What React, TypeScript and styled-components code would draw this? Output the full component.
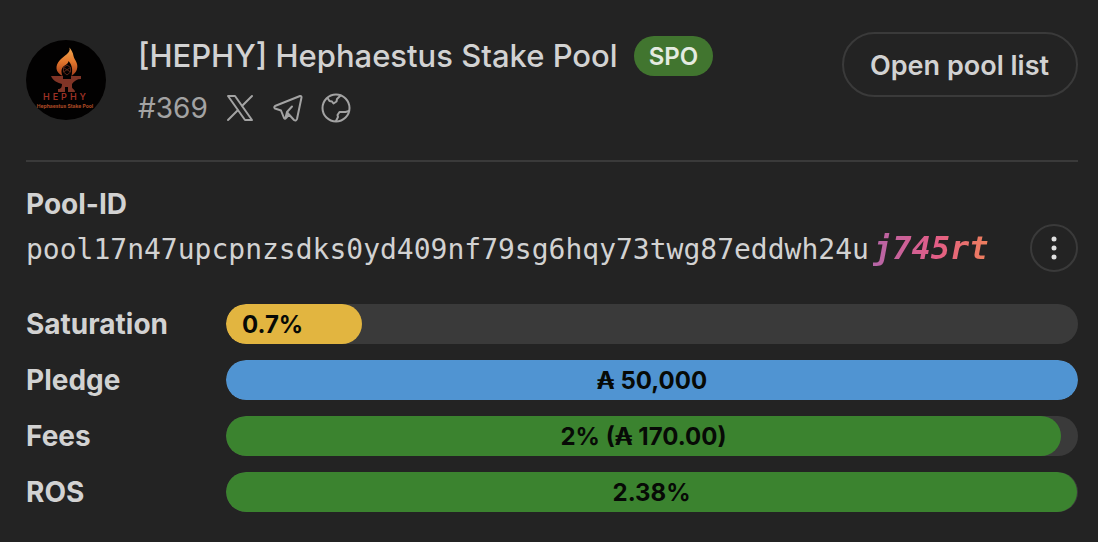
import React from "react";
import styled, { createGlobalStyle } from "styled-components";

const GlobalStyle = createGlobalStyle`
  *, *::before, *::after { box-sizing: border-box; }
  body {
    margin: 0;
    background: #232323;
    color: #d2d2d2;
    font-family: Inter, "Liberation Sans", sans-serif;
  }
`;

const Card = styled.main`
  padding: 32px 20px 28px 26px;
`;

const Header = styled.header`
  display: flex;
  align-items: flex-start;
  gap: 32px;
  padding-bottom: 32px;
  border-bottom: 2px solid #3a3a3a;
`;

const Logo = styled.svg`
  flex: none;
  width: 80px;
  height: 80px;
  margin-top: 8px;
`;

const Heading = styled.div`
  flex: 1;
  min-width: 0;
  padding-top: 4px;
`;

const TitleRow = styled.div`
  display: flex;
  align-items: center;
  gap: 16px;
`;

const Title = styled.h1`
  margin: 0;
  font-size: 31px;
  line-height: 40px;
  font-weight: 550;
`;

const Tag = styled.span`
  padding: 1px 15px 0;
  border-radius: 20px;
  background: #41752f;
  color: #e4ebe0;
  font-size: 24px;
  line-height: 39px;
  font-weight: 600;
`;

const MetaRow = styled.div`
  display: flex;
  align-items: center;
  gap: 16px;
  margin-top: 12px;
  color: #a3a3a3;
  font-size: 28px;
  line-height: 40px;
`;

const IconLink = styled.a`
  display: flex;
  color: inherit;
`;

const Icon = styled.svg`
  width: 32px;
  height: 32px;
  fill: none;
  stroke: currentColor;
  stroke-width: 2;
  stroke-linejoin: round;
  stroke-linecap: round;
`;

const OutlineButton = styled.button`
  flex: none;
  padding: 2px 27px 0 26px;
  border: 2px solid #3a3a3a;
  border-radius: 33px;
  background: transparent;
  color: #d2d2d2;
  font: 600 27px/59px Inter, "Liberation Sans", sans-serif;
`;

const PoolSection = styled.section`
  padding-top: 24px;
`;

const Label = styled.h2`
  margin: 0;
  font-size: 28px;
  line-height: 36px;
  font-weight: 650;
`;

const PoolRow = styled.div`
  display: flex;
  align-items: center;
  justify-content: space-between;
  height: 52px;
`;

const PoolId = styled.div`
  display: flex;
  align-items: baseline;
  gap: 4px;
  padding-top: 2px;
  font: 400 28px/48px "DejaVu Sans Mono", monospace;
`;

const PoolSuffix = styled.span`
  font-size: 32px;
  font-weight: 700;
  font-style: oblique;
  background: linear-gradient(90deg, #b565a7, #e35d86 55%, #ee7f5c);
  background-clip: text;
  -webkit-background-clip: text;
  color: transparent;
`;

const MenuButton = styled.button`
  display: grid;
  place-items: center;
  width: 48px;
  height: 48px;
  padding: 0;
  border: 2px solid #3a3a3a;
  border-radius: 50%;
  background: transparent;
  color: #e0e0e0;
`;

const Stats = styled.dl`
  display: grid;
  grid-template-columns: 200px 1fr;
  row-gap: 16px;
  margin: 30px 0 0;
`;

const StatName = styled.dt`
  font-size: 28px;
  line-height: 40px;
  font-weight: 650;
`;

const Track = styled.dd`
  margin: 0;
  height: 40px;
  border-radius: 20px;
  background: #3a3a3a;
  overflow: hidden;
`;

const Fill = styled.div<{ $color: string; $start?: boolean }>`
  height: 40px;
  padding: 1px 16px 0;
  border-radius: 20px;
  background: ${(p) => p.$color};
  text-align: ${(p) => (p.$start ? "left" : "center")};
  color: #070a06;
  font-size: 24px;
  line-height: 40px;
  font-weight: 700;
  white-space: nowrap;
`;

const stats = [
  { name: "Saturation", value: "0.7%", width: 16, color: "#e2b540", start: true },
  { name: "Pledge", value: "₳ 50,000", width: 100, color: "#5094d2" },
  { name: "Fees", value: "2% (₳ 170.00)", width: 98, color: "#3b832f" },
  { name: "ROS", value: "2.38%", width: 99.9, color: "#3b832f" },
];

function PoolLogo() {
  return (
    <Logo viewBox="0 0 80 80" role="img" aria-label="Hephy logo">
      <defs>
        <linearGradient id="flame" x1="0" y1="0" x2="0" y2="1">
          <stop offset="0" stopColor="#f2a850" />
          <stop offset="0.5" stopColor="#e2762c" />
          <stop offset="1" stopColor="#a03c1c" />
        </linearGradient>
      </defs>
      <circle cx="40" cy="40" r="40" fill="#020101" />
      <path
        d="M43.500 7.500C45 13 38 15.500 34 20C28.500 26 29.500 32.500 36.500 36C35 32 35 28.500 38 26C41 24 42.500 23 42.500 21C46 25 47 29 45.500 36C51 32.500 52.500 27 50.500 22.500C49.500 20 48 18.500 47.500 16C47 12.500 45.500 10 43.500 7.500Z"
        fill="url(#flame)"
      />
      <path d="M37.500 27.500L41 25L44.500 27.500V32L41 35L37.500 32ZM37.500 27.500L44.500 32M44.500 27.500L37.500 32" fill="none" stroke="#5a2618" />
      <path
        d="M25 36H37V39H45V36H55V39C51 39 48 41 46 44V47C46 49 49 49 49 52H42V47H39V52H32V49C35 49 36 47 36 44C32 43 27 41 25 36Z"
        fill="#7f3426"
      />
      <text x="40" y="60" textAnchor="middle" fontFamily="Inter, sans-serif" fontSize="9" fontWeight="600" letterSpacing="3" fill="#9c3024">HEPHY</text>
      <text x="39" y="68" textAnchor="middle" fontFamily="Inter, sans-serif" fontSize="5" fontWeight="700" fill="#b04c26">Hephaestus Stake Pool</text>
    </Logo>
  );
}

export default function App() {
  return (
    <>
      <GlobalStyle />
      <Card>
        <Header>
          <PoolLogo />
          <Heading>
            <TitleRow>
              <Title>[HEPHY] Hephaestus Stake Pool</Title>
              <Tag>SPO</Tag>
            </TitleRow>
            <MetaRow>
              <span>#369</span>
              <IconLink href="#x" aria-label="X">
                <Icon viewBox="0 0 32 32">
                  <path d="M4 4H11L28 28H21ZM28 4L18 14M14 18L4 28" />
                </Icon>
              </IconLink>
              <IconLink href="#telegram" aria-label="Telegram">
                <Icon viewBox="0 0 32 32">
                  <path d="M28 4L3 14Q1.500 15 3 16.500L9 18.500L12 26Q13 27.500 14 26L17 22.500L22 28Q24 29.500 25 27L29.500 5.500Q29.500 3.500 28 4M13.500 26L15 20L20 14.500M17 22.500L15.500 20.500" />
                </Icon>
              </IconLink>
              <IconLink href="#website" aria-label="Website">
                <Icon viewBox="0 0 32 32">
                  <circle cx="16" cy="16" r="13.500" />
                  <path d="M7.500 6L9.500 9L12 9.500L13.500 11.500L16.500 9.500L17 7L20.500 3.500M29 19L25.500 20H19.500L17.500 23L18 25L16 29" />
                </Icon>
              </IconLink>
            </MetaRow>
          </Heading>
          <OutlineButton type="button">Open pool list</OutlineButton>
        </Header>
        <PoolSection>
          <Label>Pool-ID</Label>
          <PoolRow>
            <PoolId>
              <span>pool17n47upcpnzsdks0yd409nf79sg6hqy73twg87eddwh24u</span>
              <PoolSuffix>j745rt</PoolSuffix>
            </PoolId>
            <MenuButton type="button" aria-label="More options">
              <svg width="24" height="24" viewBox="0 0 24 24" fill="currentColor" aria-hidden="true">
                <circle cx="12" cy="3" r="2.500" />
                <circle cx="12" cy="12" r="2.500" />
                <circle cx="12" cy="21" r="2.500" />
              </svg>
            </MenuButton>
          </PoolRow>
        </PoolSection>
        <Stats>
          {stats.map((s) => (
            <React.Fragment key={s.name}>
              <StatName>{s.name}</StatName>
              <Track>
                <Fill $color={s.color} $start={s.start} style={{ width: `${s.width}%` }}>
                  {s.value}
                </Fill>
              </Track>
            </React.Fragment>
          ))}
        </Stats>
      </Card>
    </>
  );
}
